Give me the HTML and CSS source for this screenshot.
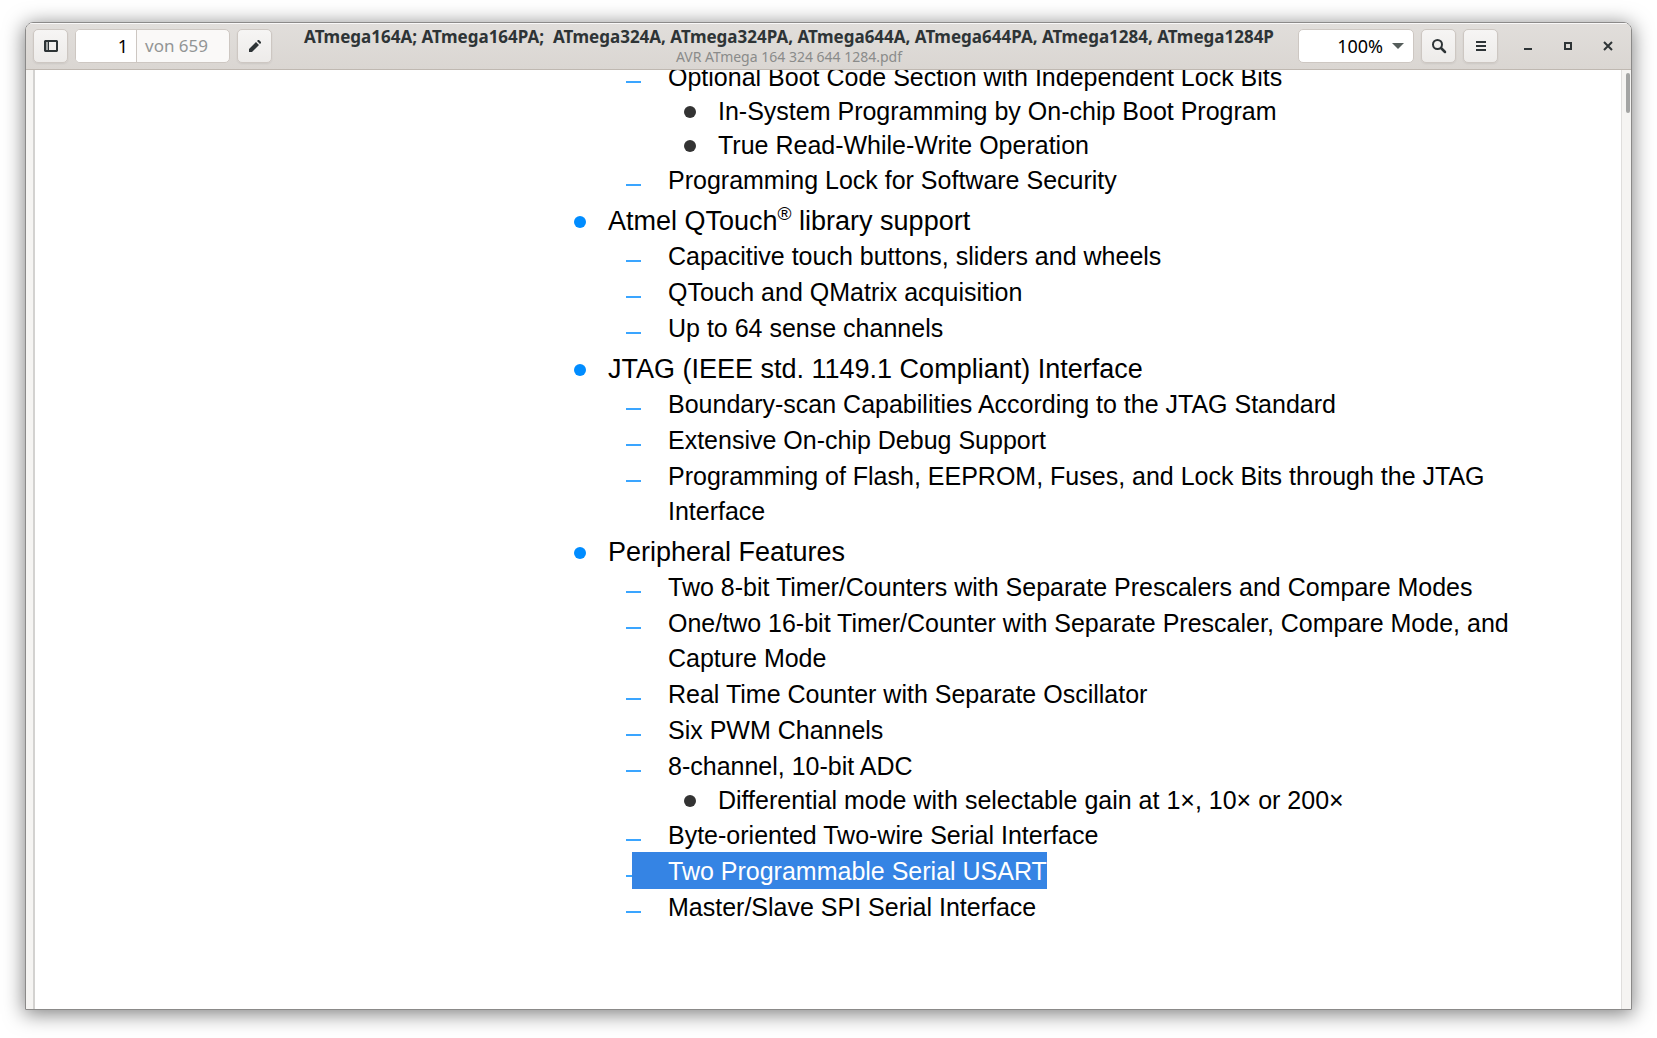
FILE: index.html
```html
<!DOCTYPE html>
<html lang="de">

<head>
  <meta charset="utf-8">
  <title>AVR ATmega 164 324 644 1284.pdf</title>
  <link rel="stylesheet" href="styles.css">
</head>

<body>
  <div class="window">
    <header class="headerbar">
      <button class="btn" aria-label="Seitenleiste">
        <svg width="16" height="16" viewBox="0 0 16 16">
          <rect x="2" y="3" width="4" height="10" fill="#a3a6a6" />
          <path d="M2 2h12l1 1v10l-1 1H2l-1-1V3zM3 4v8h2V4zm3 0v8h7V4z" fill="#2e3436" fill-rule="evenodd" />
        </svg>
      </button>
      <div class="pager">
        <input id="page" type="text" value="1" aria-label="Seite">
        <label for="page">von 659</label>
      </div>
      <button class="btn" aria-label="Anmerken">
        <svg width="16" height="16" viewBox="0 0 16 16">
          <path d="M2 14v-3l7-7 3 3-7 7zM10 3l1-1h1l2 2v1l-1 1z" fill="#2e3436" />
        </svg>
      </button>

      <div class="title">
        <h1>ATmega164A; ATmega164PA;&nbsp; ATmega324A, ATmega324PA, ATmega644A, ATmega644PA, ATmega1284, ATmega1284P</h1>
        <p>AVR ATmega 164 324 644 1284.pdf</p>
      </div>

      <div class="zoom">
        <select aria-label="Zoom">
          <option>100%</option>
        </select>
        <svg width="12" height="6" viewBox="0 0 12 6">
          <path d="M0 0h12L6 6z" fill="#555d5b" />
        </svg>
      </div>
      <button class="btn" aria-label="Suchen">
        <svg width="16" height="16" viewBox="0 0 16 16" fill="none" stroke="#2e3436">
          <circle cx="6.500" cy="6.500" r="4.500" stroke-width="2" />
          <path d="M10 10l4 4" stroke-width="2.500" stroke-linecap="round" />
        </svg>
      </button>
      <button class="btn" aria-label="Menü">
        <svg width="16" height="16" viewBox="0 0 16 16">
          <path d="M3 3h10v2H3zM3 7h10v2H3zM3 11h10v2H3z" fill="#2e3436" />
        </svg>
      </button>
      <div class="controls">
        <button aria-label="Minimieren">
          <svg width="16" height="16" viewBox="0 0 16 16">
            <path d="M4 10h8v2H4z" fill="#2e3436" />
          </svg>
        </button>
        <button aria-label="Maximieren">
          <svg width="16" height="16" viewBox="0 0 16 16">
            <path d="M4 4h8v8H4zM6 6v4h4V6z" fill="#2e3436" fill-rule="evenodd" />
          </svg>
        </button>
        <button aria-label="Schließen">
          <svg width="16" height="16" viewBox="0 0 16 16">
            <path d="M4 4l8 8M12 4l-8 8" stroke="#2e3436" stroke-width="2" />
          </svg>
        </button>
      </div>
    </header>

    <main class="viewer">
      <article class="page">
        <ul class="features">
          <li>
            <ul>
              <li>Optional Boot Code Section with Independent Lock Bits
                <ul>
                  <li>In-System Programming by On-chip Boot Program</li>
                  <li>True Read-While-Write Operation</li>
                </ul>
              </li>
              <li>Programming Lock for Software Security</li>
            </ul>
          </li>
          <li class="topic">Atmel QTouch<sup>®</sup> library support
            <ul>
              <li>Capacitive touch buttons, sliders and wheels</li>
              <li>QTouch and QMatrix acquisition</li>
              <li>Up to 64 sense channels</li>
            </ul>
          </li>
          <li class="topic">JTAG (IEEE std. 1149.1 Compliant) Interface
            <ul>
              <li>Boundary-scan Capabilities According to the JTAG Standard</li>
              <li>Extensive On-chip Debug Support</li>
              <li>Programming of Flash, EEPROM, Fuses, and Lock Bits through the JTAG Interface</li>
            </ul>
          </li>
          <li class="topic">Peripheral Features
            <ul>
              <li>Two 8-bit Timer/Counters with Separate Prescalers and Compare Modes</li>
              <li>One/two 16-bit Timer/Counter with Separate Prescaler, Compare Mode, and Capture Mode</li>
              <li>Real Time Counter with Separate Oscillator</li>
              <li>Six PWM Channels</li>
              <li>8-channel, 10-bit ADC
                <ul>
                  <li>Differential mode with selectable gain at 1×, 10× or 200×</li>
                </ul>
              </li>
              <li>Byte-oriented Two-wire Serial Interface</li>
              <li><mark>Two Programmable Serial USART</mark></li>
              <li>Master/Slave SPI Serial Interface</li>
            </ul>
          </li>
        </ul>
      </article>
      <div class="scrollbar">
        <div class="thumb"></div>
      </div>
    </main>
  </div>
</body>

</html>
```

FILE: styles.css
```css
* {
  box-sizing: border-box;
}

body {
  margin: 0;
  padding: 22px 25px 28px;
  height: 100vh;
  background: white;
  font-family: "Noto Sans", sans-serif;
  font-size: 18px;
  color: #2e3436;
}

.window {
  display: flex;
  flex-direction: column;
  height: 100%;
  border: 1px solid #8b8a89;
  border-radius: 8px 8px 0 0;
  overflow: hidden;
  box-shadow: 0 3px 20px 1px rgba(0, 0, 0, 0.5);
}

/* header bar */

.headerbar {
  display: flex;
  align-items: center;
  gap: 7px;
  flex: none;
  height: 47px;
  padding: 0 3px 0 7px;
  background: linear-gradient(#e1dedb, #dad6d2);
  border-bottom: 1px solid #bfb8b1;
  box-shadow: inset 0 1px #f9f8f8;
}

button {
  display: flex;
  align-items: center;
  justify-content: center;
  padding: 0;
  border: none;
  background: none;
}

.btn {
  flex: none;
  width: 35px;
  height: 34px;
  border: 1px solid #cdc7c2;
  border-radius: 5px;
  background: linear-gradient(#f6f5f4, #edebe9);
  box-shadow: 0 1px 2px rgba(0, 0, 0, 0.07);
}

.pager {
  display: flex;
  flex: none;
  width: 155px;
  height: 34px;
  border: 1px solid #cdc7c2;
  border-radius: 5px;
  background: #faf9f8;
  overflow: hidden;
}

.pager input {
  width: 61px;
  padding: 0 8px;
  border: none;
  border-right: 1px solid #cdc7c2;
  background: white;
  color: black;
  font: inherit;
  text-align: right;
}

.pager label {
  padding-left: 8px;
  line-height: 32px;
  font-size: 17px;
  color: #929595;
}

.title {
  flex: 1;
  min-width: 0;
  padding-left: 8px;
  text-align: center;
  white-space: nowrap;
}

.title h1 {
  margin: 0;
  font-size: 17px;
  line-height: 22px;
  font-weight: 700;
}

.title p {
  margin: 0;
  font-size: 14px;
  line-height: 18px;
  color: #8a8b8a;
}

.zoom {
  position: relative;
  flex: none;
  width: 116px;
  height: 34px;
}

.zoom select {
  appearance: none;
  width: 100%;
  height: 100%;
  padding: 0 30px 0 8px;
  border: 1px solid #cdc7c2;
  border-radius: 5px;
  background: white;
  color: black;
  font: inherit;
  text-align-last: right;
}

.zoom svg {
  position: absolute;
  top: 14px;
  right: 10px;
  pointer-events: none;
}

.controls {
  display: flex;
  margin-left: 3px;
}

.controls button {
  width: 40px;
  height: 34px;
}

/* document */

.viewer {
  display: flex;
  flex: 1;
  min-height: 0;
  background: #f5f4f2;
  overflow: hidden;
}

.page {
  flex: 1;
  margin-left: 7px;
  padding: 0 80px 0 573px;
  border-left: 2px solid #d3d2d0;
  border-right: 1px solid #dfdedc;
  background: white;
  color: black;
  font-family: "Liberation Sans", Arial, sans-serif;
  font-size: 25px;
  line-height: 35px;
}

ul {
  margin: 0;
  padding: 0;
  list-style: none;
}

/* scrolled a little way into the page */
.features {
  margin-top: -10px;
}

.topic {
  margin-top: 6px;
  font-size: 27px;
}

.features li {
  position: relative;
}

.features > li > ul {
  padding-left: 60px;
  font-size: 25px;
}

.features > li > ul > li + li {
  margin-top: 1px;
}

.features ul ul {
  margin-top: -1px;
  padding-left: 50px;
  line-height: 34px;
}

.features li::before {
  position: absolute;
  content: "";
}

.topic::before {
  top: 12px;
  left: -34px;
  width: 12px;
  height: 12px;
  border-radius: 50%;
  background: #008cff;
}

.features > li > ul > li::before {
  top: 21px;
  left: -42px;
  width: 15px;
  height: 2px;
  background: #3aa5ff;
}

.features ul ul li::before {
  top: 12px;
  left: -34px;
  width: 12px;
  height: 12px;
  border-radius: 50%;
  background: #333;
}

sup {
  font-size: 19px;
  line-height: 0;
}

mark {
  position: relative;
  margin-left: -36px;
  padding: 5px 0 4px 36px;
  background: #3584e4;
  color: white;
}

.scrollbar {
  width: 9px;
  padding: 3px 1px 0 4px;
}

.thumb {
  height: 40px;
  border-radius: 2px;
  background: #a3a4a3;
}
```
